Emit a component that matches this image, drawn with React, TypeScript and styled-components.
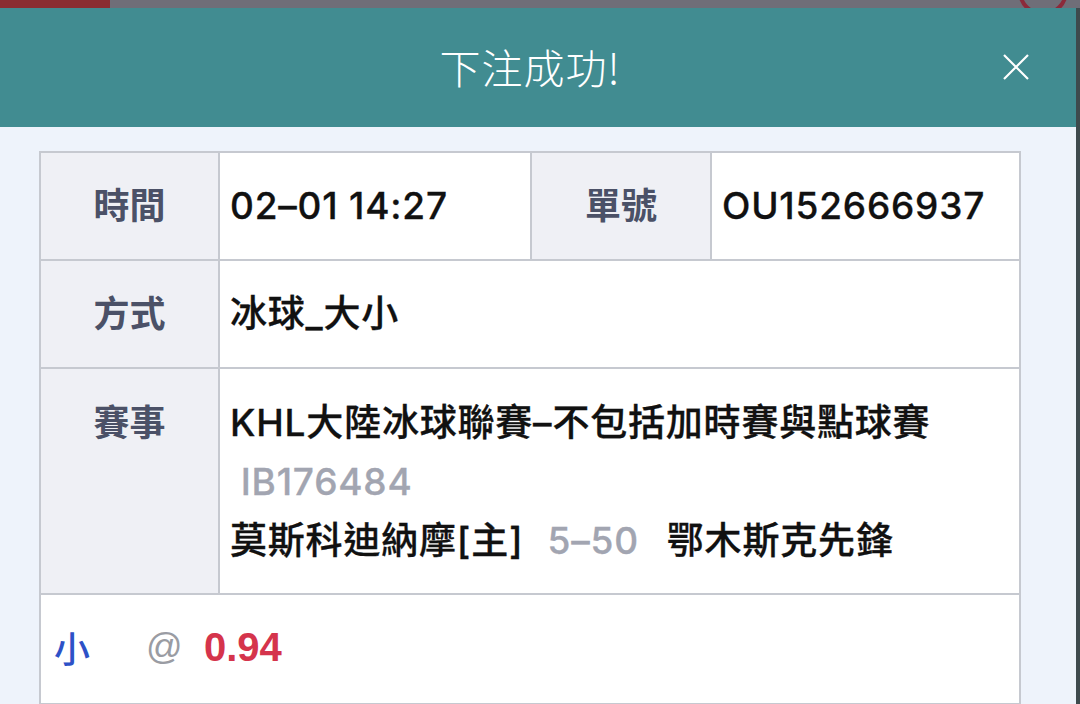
import { createGlobalStyle, styled } from 'styled-components'

const GlobalStyle = createGlobalStyle`
  html, body {
    margin: 0;
    padding: 0;
    height: 100%;
    overflow: hidden;
    background: #3e4a4d;
  }
  body {
    font-family: Inter, "Noto Sans CJK TC", sans-serif;
  }
`

const BORDER = '#c6c9d0'

export default function App() {
  return (
    <>
      <GlobalStyle />
      <Backdrop>
        <TopStrip>
          <RedTab />
          <Ring />
        </TopStrip>
        <Modal>
          <Header>
            <Title>下注成功!</Title>
            <Close aria-label="close">
              <svg width="28" height="28" viewBox="0 0 28 28">
                <path d="M2 2 L26 26 M26 2 L2 26" stroke="#fff" strokeWidth="2.2" fill="none" />
              </svg>
            </Close>
          </Header>
          <Body>
            <Table>
              <Label>時間</Label>
              <Value>02–01 14:27</Value>
              <Label>單號</Label>
              <Value $last>OU152666937</Value>

              <Label>方式</Label>
              <Value $span $last>冰球_大小</Value>

              <Label $top>賽事</Label>
              <Value $span $last $multi>
                <Line>KHL大陸冰球聯賽–不包括加時賽與點球賽</Line>
                <Line $muted>&nbsp;IB176484</Line>
                <Line>
                  莫斯科迪納摩[主]<Muted>5–50</Muted>鄂木斯克先鋒
                </Line>
              </Value>

              <Pick>
                <Side>小</Side>
                <At>@</At>
                <Odds>0.94</Odds>
              </Pick>

              <Half />
              <Half $last />
            </Table>
          </Body>
        </Modal>
      </Backdrop>
    </>
  )
}

const Backdrop = styled.div`
  display: flex;
  flex-direction: column;
  width: 1080px;
  height: 704px;
  overflow: hidden;
`

const TopStrip = styled.div`
  position: relative;
  height: 8px;
  background: #6f6e78;
  flex-shrink: 0;
`

const RedTab = styled.div`
  width: 110px;
  height: 8px;
  background: #8a2d31;
`

const Ring = styled.div`
  position: absolute;
  right: 12px;
  top: -34px;
  width: 42px;
  height: 42px;
  border: 4px solid #8c2a3a;
  border-radius: 50%;
`

const Modal = styled.div`
  width: 1076px;
  flex: 1;
  display: flex;
  flex-direction: column;
  background: #eef3fb;
`

const Header = styled.div`
  position: relative;
  height: 119px;
  flex-shrink: 0;
  display: flex;
  align-items: center;
  justify-content: center;
  padding: 0 16px 4px 0;
  box-sizing: border-box;
  background: #418c91;
`

const Title = styled.h1`
  margin: 0;
  color: #ffffff;
  font-family: "Noto Sans CJK TC", sans-serif;
  font-size: 41px;
  font-weight: 300;
  letter-spacing: 1px;
`

const Close = styled.button`
  position: absolute;
  right: 46px;
  top: 45px;
  padding: 0;
  border: 0;
  background: none;
  display: flex;
`

const Body = styled.div`
  padding: 24px 55px 0 39px;
`

const Table = styled.div`
  display: grid;
  grid-template-columns: 179px 312px 180px 1fr;
  background: #ffffff;
  border: 2px solid ${BORDER};
  border-bottom: 0;
`

const Label = styled.div<{ $top?: boolean }>`
  display: flex;
  justify-content: center;
  align-items: ${({ $top }) => ($top ? 'flex-start' : 'center')};
  padding: ${({ $top }) => ($top ? '22px 0 0' : '0 0 5px')};
  height: ${({ $top }) => ($top ? 'auto' : '108px')};
  box-sizing: border-box;
  background: #eff0f5;
  color: #4b5167;
  font-family: "Noto Sans CJK TC", sans-serif;
  font-size: 36px;
  font-weight: 700;
  line-height: 59px;
  border-right: 2px solid ${BORDER};
  border-bottom: 2px solid ${BORDER};
`

const Value = styled.div<{ $span?: boolean; $last?: boolean; $multi?: boolean }>`
  grid-column: ${({ $span }) => ($span ? 'span 3' : 'auto')};
  display: flex;
  flex-direction: column;
  justify-content: ${({ $multi }) => ($multi ? 'flex-start' : 'center')};
  padding: ${({ $multi }) => ($multi ? '24px 10px 23px' : '0 10px 2px')};
  min-height: 108px;
  box-sizing: border-box;
  color: #111111;
  font-size: 37px;
  font-weight: 500;
  line-height: 59px;
  letter-spacing: 0.8px;
  white-space: nowrap;
  -webkit-text-stroke: 0.3px #111111;
  border-right: ${({ $last }) => ($last ? '0' : `2px solid ${BORDER}`)};
  border-bottom: 2px solid ${BORDER};
`

const Line = styled.div<{ $muted?: boolean }>`
  color: ${({ $muted }) => ($muted ? '#a2a5b1' : '#111111')};
  -webkit-text-stroke: 0.3px ${({ $muted }) => ($muted ? '#a2a5b1' : '#111111')};
`

const Muted = styled.span`
  margin: 0 28px 0 24px;
  color: #a2a5b1;
  -webkit-text-stroke: 0.3px #a2a5b1;
`

const Pick = styled.div`
  grid-column: span 4;
  display: flex;
  align-items: center;
  height: 110px;
  box-sizing: border-box;
  padding: 0 0 4px 13px;
  font-size: 36px;
  border-bottom: 2px solid ${BORDER};
`

const Side = styled.span`
  color: #2d51c7;
  font-family: "Noto Sans CJK TC", sans-serif;
  font-weight: 500;
  width: 92px;
`

const At = styled.span`
  color: #9a9ca3;
  font-family: "Liberation Sans", sans-serif;
  width: 58px;
`

const Odds = styled.span`
  color: #d5344c;
  font-family: "Liberation Sans", sans-serif;
  font-size: 40px;
  font-weight: 700;
`

const Half = styled.div<{ $last?: boolean }>`
  grid-column: span 2;
  height: 100px;
  border-right: ${({ $last }) => ($last ? '0' : `2px solid ${BORDER}`)};
`
